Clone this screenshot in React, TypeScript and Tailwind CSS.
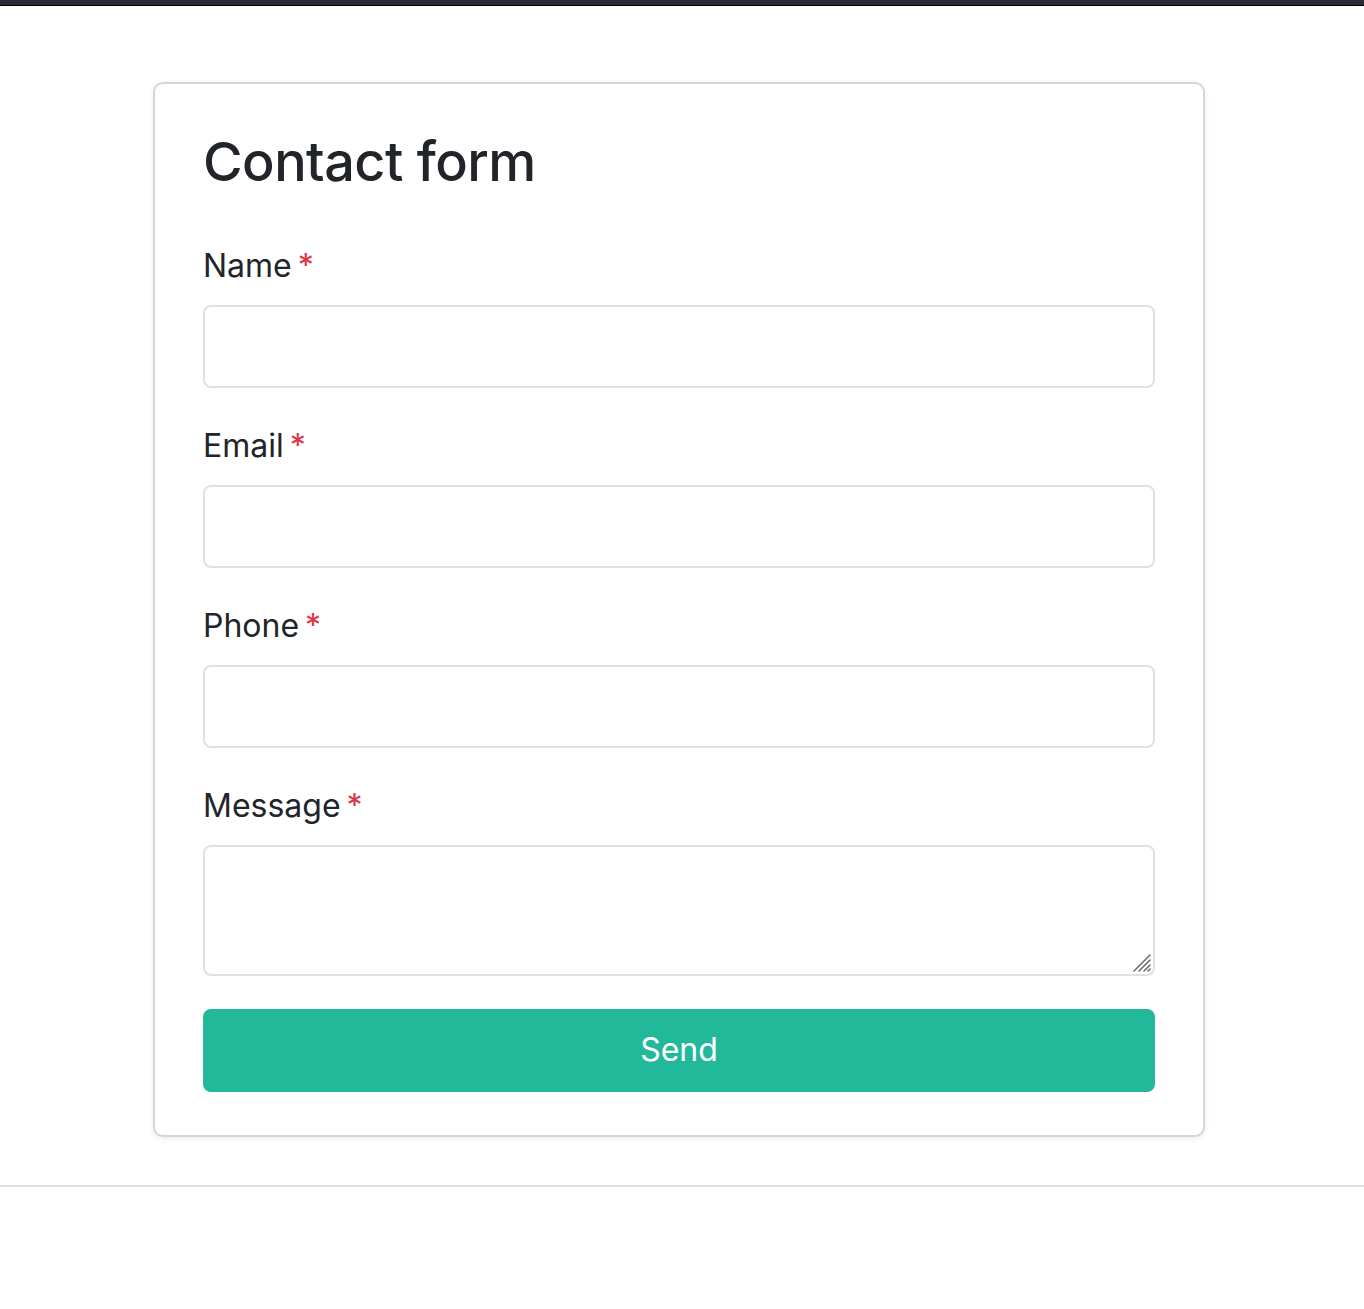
import React from 'react';

// ─────────────────────────────────────────────
// Contact form page
// ─────────────────────────────────────────────

const fields = [
  { label: 'Name', type: 'text' },
  { label: 'Email', type: 'email' },
  { label: 'Phone', type: 'tel' },
];

function Label({ text }: { text: string }) {
  return (
    <label className="mb-[15px] block text-[32px] leading-[1.5] text-[#212529]">
      {text}
      <span className="ml-[6px] text-[#dc3545]">*</span>
    </label>
  );
}

export default function App() {
  return (
    <div className="min-h-[1309px] bg-white font-['Inter','Liberation_Sans',sans-serif]">
      <div className="h-[6px] border-b border-black bg-[#2b2838]" />

      <div className="ml-[153px] mt-[76px] w-[1052px] rounded-[10px] border-2 border-[#d6d6d6] bg-white px-[48px] pb-[43px] pt-[46px] shadow-[0_2px_6px_rgba(0,0,0,0.08)]">
        <h1 className="mb-[47px] text-[54px] font-medium leading-[1.2] tracking-[-0.01em] text-[#212529]">
          Contact form
        </h1>

        <form className="flex flex-col">
          {fields.map((f) => (
            <div key={f.label} className="mb-[34px]">
              <Label text={f.label} />
              <input
                type={f.type}
                className="block h-[83px] w-full rounded-[8px] border-2 border-[#dee2e6] bg-white px-4 text-[32px] outline-none"
              />
            </div>
          ))}

          <div className="mb-[33px]">
            <Label text="Message" />
            <div className="relative">
              <textarea className="block h-[131px] w-full resize-none rounded-[8px] border-2 border-[#dee2e6] bg-white px-4 text-[32px] outline-none" />
              {/* resize grip */}
              <svg
                className="pointer-events-none absolute bottom-[3px] right-[3px]"
                width="20"
                height="20"
                viewBox="0 0 20 20"
              >
                <g stroke="#6b6b6b" strokeWidth="1.6" strokeLinecap="round">
                  <line x1="2" y1="18" x2="18" y2="2" />
                  <line x1="7" y1="18" x2="18" y2="7" />
                  <line x1="12" y1="18" x2="18" y2="12" />
                  <line x1="16" y1="18" x2="18" y2="16" />
                </g>
              </svg>
            </div>
          </div>

          <button
            type="button"
            className="h-[83px] w-full rounded-[8px] bg-[#22b99a] text-[32px] text-white"
          >
            Send
          </button>
        </form>
      </div>

      <div className="mt-[48px] border-t-2 border-[#dee2e6]" />
    </div>
  );
}
